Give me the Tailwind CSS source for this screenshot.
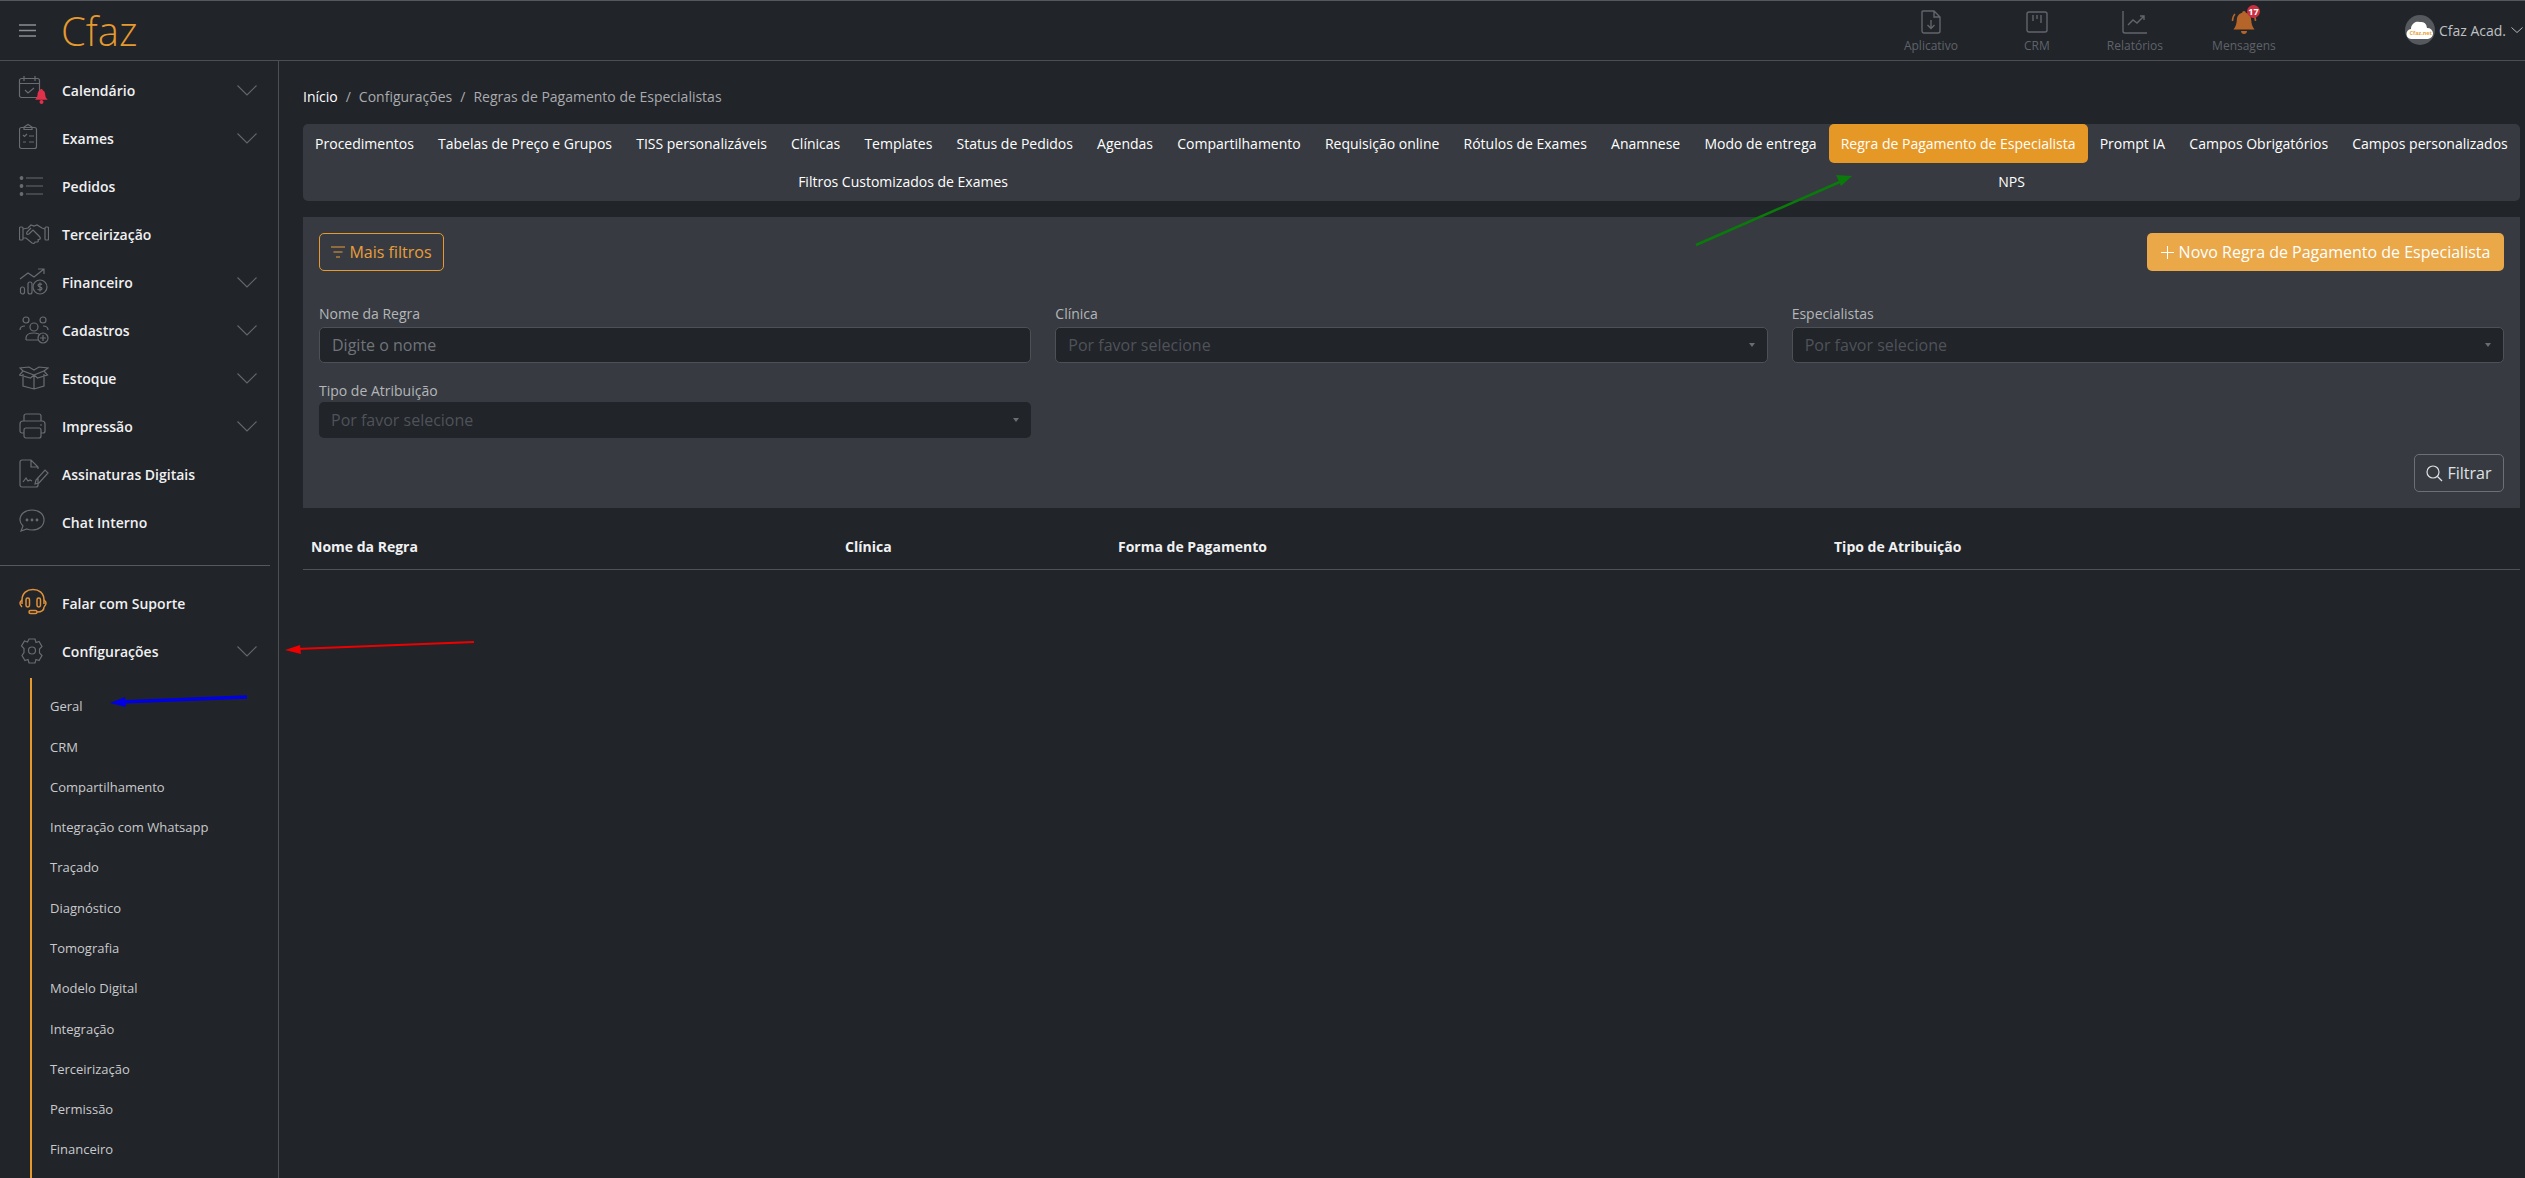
<!DOCTYPE html>
<html lang="pt-BR">
<head>
  <meta charset="UTF-8" />
  <title>Cfaz - Regras de Pagamento de Especialistas</title>
  <script src="https://cdn.jsdelivr.net/npm/@tailwindcss/browser@4"></script>
</head>
<body class="relative h-[1178px] w-[2525px] overflow-hidden bg-[#212429] font-['Open_Sans',sans-serif] text-[14px] text-white">

  <!-- top bar -->
  <header class="flex h-[61px] items-stretch border-t border-b border-t-[#55585c] border-b-[#4b4e53]">
    <div class="flex items-center">
      <svg class="ml-[19px] h-[13px] w-[17px] text-[#8b8e92]" viewBox="0 0 17 13" fill="none" stroke="currentColor" stroke-width="1.3"><path d="M0 1h17M0 6.500h17M0 12h17"/></svg>
      <span class="ml-[25px] text-[40px] leading-[40px] font-light text-[#e69a2e]">Cfaz</span>
    </div>
    <div class="ml-auto flex items-stretch">
      <div class="flex w-[106px] flex-col items-center pt-[9px]">
        <svg class="h-[24px] w-[20px] text-[#62666c]" viewBox="0 0 20 24" fill="none" stroke="currentColor" stroke-width="1.400"><path d="M2 1h11l6 6v14a2 2 0 0 1-2 2H3a2 2 0 0 1-2-2V2a1 1 0 0 1 1-1zM13 1v6h6M10 10v8M6.500 15l3.500 3.500 3.500-3.500"/></svg>
        <span class="mt-[3px] text-[12px] leading-[18px] text-[#5f6369]">Aplicativo</span>
      </div>
      <div class="flex w-[106px] flex-col items-center pt-[9px]">
        <svg class="h-[24px] w-[22px] text-[#62666c]" viewBox="0 0 22 24" fill="none" stroke="currentColor" stroke-width="1.400"><rect x="1" y="2" width="20" height="20" rx="2"/><path d="M7 5v6M11 5v4M15 5v8"/></svg>
        <span class="mt-[3px] text-[12px] leading-[18px] text-[#5f6369]">CRM</span>
      </div>
      <div class="flex w-[90px] flex-col items-center pt-[9px]">
        <svg class="h-[24px] w-[26px] text-[#62666c]" viewBox="0 0 26 24" fill="none" stroke="currentColor" stroke-width="1.400"><path d="M1 1v20a2 2 0 0 0 2 2h22M6 15l5-5 4 3 7-7M18 6h4v4"/></svg>
        <span class="mt-[3px] text-[12px] leading-[18px] text-[#5f6369]">Relatórios</span>
      </div>
      <div class="relative flex w-[128px] flex-col items-center pt-[9px]">
        <svg class="h-[24px] w-[26px] text-[#b5652a]" viewBox="0 0 26 24" fill="currentColor"><path d="M13 1c1 0 1.800.8 1.800 1.800 3.700.9 5.200 3.700 5.400 7.200.2 3.500 1 6.500 3.300 9.500H2.500C4.800 16.500 5.600 13.500 5.800 10c.2-3.500 1.700-6.300 5.400-7.200C11.200 1.800 12 1 13 1z"/><path d="M10 21h6c0 2-1.300 3-3 3s-3-1-3-3z"/><path d="M4 4C2 6 1.500 9 1.500 11M22 4c2 2 2.500 5 2.500 7" fill="none" stroke="currentColor" stroke-width="1.500"/></svg>
        <span class="absolute top-[4px] left-[67px] flex h-[13px] w-[13px] items-center justify-center rounded-full bg-[#c9303f] text-[9px] leading-none font-bold text-white">17</span>
        <span class="mt-[3px] text-[12px] leading-[18px] text-[#5f6369]">Mensagens</span>
      </div>
      <div class="ml-[97px] flex items-center pr-[2px] pb-[1px]">
        <span class="flex h-[30px] w-[30px] items-center justify-center rounded-full bg-[#55585c]">
          <svg class="h-[22px] w-[28px]" viewBox="0 0 28 22"><path fill="#fff" d="M6 20a5 5 0 0 1-1-10 7 7 0 0 1 9-7 6 6 0 0 1 7 6 5.500 5.500 0 0 1 1 11z"/><text x="3.500" y="16" font-size="5.500" font-weight="700" fill="#e8a33c">Cfaz.net</text></svg>
        </span>
        <span class="ml-[4px] text-[14px] text-[#bfc1c3]">Cfaz Acad.</span>
        <svg class="ml-[5px] h-[6px] w-[12px] text-[#b5b7b9]" viewBox="0 0 12 6" fill="none" stroke="currentColor" stroke-width="1"><path d="M.5.5 6 5.500 11.500.5"/></svg>
      </div>
    </div>
  </header>

  <div class="flex h-[1117px]">
    <!-- sidebar -->
    <aside class="w-[279px] shrink-0 overflow-hidden border-r border-[#4b4e53] pt-[5px]">
      <nav class="text-[14px] font-semibold text-[#f0f1f2]">
        <a class="flex h-[48px] items-center pr-[21px] pl-[19px]">
          <svg class="mr-[13px] h-[30px] w-[30px] overflow-visible" viewBox="0 0 30 30" fill="none" stroke="#696d73" stroke-width="1.200"><rect x="0.500" y="3.500" width="20" height="19" rx="2"/><path d="M.5 8.500h20M5 1v5M16 1v5M6 15l3 3 6-5"/><path fill="#e0304a" stroke="none" d="M22.500 14c.8 0 1.200.6 1.200 1.300 2 .6 2.300 2.500 2.500 4.500.2 2 .8 3.500 2.500 5H16c1.700-1.500 2.300-3 2.500-5 .2-2 .5-3.900 2.500-4.500 0-.7.400-1.300 1.500-1.300z"/><circle cx="22.500" cy="27" r="2" fill="#e0304a" stroke="none"/></svg>
          <span>Calendário</span>
          <svg class="ml-auto h-[11px] w-[20px]" viewBox="0 0 20 11" fill="none" stroke="#64686e" stroke-width="1.100"><path d="M.5.5 10 10 19.500.5"/></svg>
        </a>
        <a class="flex h-[48px] items-center pr-[21px] pl-[19px]">
          <svg class="mr-[13px] h-[30px] w-[30px]" viewBox="0 0 30 30" fill="none" stroke="#696d73" stroke-width="1.200"><rect x="0.500" y="4.500" width="17" height="21" rx="2"/><path d="M5 6.500V4l4-2.500L13 4v2.500zM4 12l1.500 1.500L8 11M10 13h5M4 19h3M10 19h5"/></svg>
          <span>Exames</span>
          <svg class="ml-auto h-[11px] w-[20px]" viewBox="0 0 20 11" fill="none" stroke="#64686e" stroke-width="1.100"><path d="M.5.5 10 10 19.500.5"/></svg>
        </a>
        <a class="flex h-[48px] items-center pr-[21px] pl-[19px]">
          <svg class="mr-[13px] h-[30px] w-[30px]" viewBox="0 0 30 30" fill="none" stroke="#696d73" stroke-width="1.200"><path d="M7 7h17M7 15h17M7 23h17"/><circle cx="2.500" cy="7" r="1.300" fill="#696d73"/><circle cx="2.500" cy="15" r="1.300" fill="#696d73"/><circle cx="2.500" cy="23" r="1.300" fill="#696d73"/></svg>
          <span>Pedidos</span>
        </a>
        <a class="flex h-[48px] items-center pr-[21px] pl-[19px]">
          <svg class="mr-[13px] h-[30px] w-[30px]" viewBox="0 0 30 30" fill="none" stroke="#696d73" stroke-width="1.200"><rect x="0.500" y="8" width="3.500" height="13" rx="1"/><rect x="26" y="8" width="3.500" height="13" rx="1"/><path d="M4 10l5-1 3-3 3 1 3-1 5 3 3 1M4 19l3 0 6 5c2 1 3 0 3-1l2 0c1 0 2-1 1-2l2-1c1-1 0-2-1-3l-6-6-4 4c-2 1-3 0-2-2l4-4"/></svg>
          <span>Terceirização</span>
        </a>
        <a class="flex h-[48px] items-center pr-[21px] pl-[19px]">
          <svg class="mr-[13px] h-[30px] w-[30px]" viewBox="0 0 30 30" fill="none" stroke="#696d73" stroke-width="1.200"><path d="M1 12l8-6 6 4 10-8M19 2h6v5"/><rect x="1.500" y="20" width="4" height="7" rx="2"/><rect x="9" y="15" width="4" height="12" rx="2"/><circle cx="21" cy="20" r="7"/><path d="M23 17.500c-1-1-4-1-4 .8 0 2 4 1 4 3.200 0 1.800-3 1.800-4.500.8M21 15.500v9"/></svg>
          <span>Financeiro</span>
          <svg class="ml-auto h-[11px] w-[20px]" viewBox="0 0 20 11" fill="none" stroke="#64686e" stroke-width="1.100"><path d="M.5.5 10 10 19.500.5"/></svg>
        </a>
        <a class="flex h-[48px] items-center pr-[21px] pl-[19px]">
          <svg class="mr-[13px] h-[30px] w-[30px]" viewBox="0 0 30 30" fill="none" stroke="#696d73" stroke-width="1.200"><circle cx="7" cy="5" r="3"/><circle cx="24" cy="5" r="3"/><circle cx="15" cy="12" r="4"/><path d="M1 15c0-3 2-4 5-4M29 15c0-3-2-4-5-4M7 25v-2c0-3 3-5 8-5 2 0 3 .3 5 1M7 25h12"/><circle cx="24" cy="23" r="5"/><path d="M24 20v6M21 23h6"/></svg>
          <span>Cadastros</span>
          <svg class="ml-auto h-[11px] w-[20px]" viewBox="0 0 20 11" fill="none" stroke="#64686e" stroke-width="1.100"><path d="M.5.5 10 10 19.500.5"/></svg>
        </a>
        <a class="flex h-[48px] items-center pr-[21px] pl-[19px]">
          <svg class="mr-[13px] h-[30px] w-[30px]" viewBox="0 0 30 30" fill="none" stroke="#696d73" stroke-width="1.200"><path d="M4 11v12l11 3 10-3V11M15 12v14M15 12L4 8l-3.500 4 11 3zM15 12l10-4 3.500 4-10 3zM4 8l-3-3 9-1 5 3 5-3 9 1-4 3"/></svg>
          <span>Estoque</span>
          <svg class="ml-auto h-[11px] w-[20px]" viewBox="0 0 20 11" fill="none" stroke="#64686e" stroke-width="1.100"><path d="M.5.5 10 10 19.500.5"/></svg>
        </a>
        <a class="flex h-[48px] items-center pr-[21px] pl-[19px]">
          <svg class="mr-[13px] h-[30px] w-[30px]" viewBox="0 0 30 30" fill="none" stroke="#696d73" stroke-width="1.200"><path d="M5 10V5a2 2 0 0 1 2-2h13a2 2 0 0 1 2 2v5M5 22H3a2 2 0 0 1-2-2v-7a3 3 0 0 1 3-3h19a3 3 0 0 1 3 3v7a2 2 0 0 1-2 2h-2"/><rect x="5" y="17" width="17" height="10" rx="2"/><path d="M21 14h2"/></svg>
          <span>Impressão</span>
          <svg class="ml-auto h-[11px] w-[20px]" viewBox="0 0 20 11" fill="none" stroke="#64686e" stroke-width="1.100"><path d="M.5.5 10 10 19.500.5"/></svg>
        </a>
        <a class="flex h-[48px] items-center pr-[21px] pl-[19px]">
          <svg class="mr-[13px] h-[30px] w-[30px]" viewBox="0 0 30 30" fill="none" stroke="#696d73" stroke-width="1.200"><path d="M19 18v8a2 2 0 0 1-2 2H3a2 2 0 0 1-2-2V3a2 2 0 0 1 2-2h9l7 7v2M12 1v7h7M4 23l3-4 2 3 2-1 2 1M17 21l-1 4 4-1 9-10-3-3z"/></svg>
          <span>Assinaturas Digitais</span>
        </a>
        <a class="flex h-[48px] items-center pr-[21px] pl-[19px]">
          <svg class="mr-[13px] h-[30px] w-[30px]" viewBox="0 0 30 30" fill="none" stroke="#696d73" stroke-width="1.200"><path d="M13 3c7 0 12 4 12 10s-5 10-12 10c-2 0-3 0-5-1l-6 2 2-5c-2-2-3-4-3-6C1 7 6 3 13 3z"/><circle cx="8" cy="13" r=".8" fill="#696d73"/><circle cx="13" cy="13" r=".8" fill="#696d73"/><circle cx="18" cy="13" r=".8" fill="#696d73"/></svg>
          <span>Chat Interno</span>
        </a>

        <div class="mt-[19px] mb-[13px] h-px w-[270px] bg-[#55585c]"></div>

        <a class="flex h-[48px] items-center pr-[21px] pl-[19px]">
          <svg class="mr-[13px] h-[30px] w-[30px]" viewBox="0 0 30 30" fill="none" stroke="#e0913a" stroke-width="1.500"><path d="M3 16V12C3 5 8 1.500 14 1.500S25 5 25 12v4"/><rect x="7" y="10" width="3.500" height="9" rx="1.700"/><rect x="18" y="10" width="3.500" height="9" rx="1.700"/><path d="M3 12c-1.500 1-2 2-2 3s1 3 2 4M25 12c1.500 1 2 2 2 3s-1 3-2 4M25 19c0 4-3 5-7 5"/><rect x="10" y="22.500" width="8" height="3" rx="1.500"/></svg>
          <span>Falar com Suporte</span>
        </a>
        <a class="flex h-[48px] items-center pr-[21px] pl-[19px]">
          <svg class="mr-[13px] h-[30px] w-[30px]" viewBox="0 0 30 30" fill="none" stroke="#696d73" stroke-width="1.200"><path d="M10 3h6l1 3.500 3-1 3 5-2.500 2.500v4l2.500 2.500-3 5-3-1-1 3.500h-6l-1-3.500-3 1-3-5L5 16.500v-4L2.500 10l3-5 3 1z"/><circle cx="13" cy="14.500" r="3.500"/></svg>
          <span>Configurações</span>
          <svg class="ml-auto h-[11px] w-[20px]" viewBox="0 0 20 11" fill="none" stroke="#64686e" stroke-width="1.100"><path d="M.5.5 10 10 19.500.5"/></svg>
        </a>
      </nav>

      <ul class="mt-[3px] ml-[30px] border-l-2 border-[#e69a2e] pt-[9px] pb-[40px] pl-[18px] text-[13px] text-[#c9cacc]">
        <li class="flex h-[40.27px] items-center">Geral</li>
        <li class="flex h-[40.27px] items-center">CRM</li>
        <li class="flex h-[40.27px] items-center">Compartilhamento</li>
        <li class="flex h-[40.27px] items-center">Integração com Whatsapp</li>
        <li class="flex h-[40.27px] items-center">Traçado</li>
        <li class="flex h-[40.27px] items-center">Diagnóstico</li>
        <li class="flex h-[40.27px] items-center">Tomografia</li>
        <li class="flex h-[40.27px] items-center">Modelo Digital</li>
        <li class="flex h-[40.27px] items-center">Integração</li>
        <li class="flex h-[40.27px] items-center">Terceirização</li>
        <li class="flex h-[40.27px] items-center">Permissão</li>
        <li class="flex h-[40.27px] items-center">Financeiro</li>
      </ul>
    </aside>

    <!-- content -->
    <main class="min-w-0 flex-1 pt-[26px] pr-[5px] pl-[24px]">
      <nav class="flex h-[20px] items-center text-[14px] leading-[20px] text-[#a9abae]">
        <span class="text-white">Início</span>
        <span class="mx-[8px]">/</span>
        <span>Configurações</span>
        <span class="mx-[8px]">/</span>
        <span>Regras de Pagamento de Especialistas</span>
      </nav>

      <div class="mt-[17px] flex flex-wrap justify-around rounded-[5px] bg-[#373b41] pb-[1px] text-[14px] text-white">
        <a class="flex h-[39px] items-center rounded-[5px] px-[12px]">Procedimentos</a>
        <a class="flex h-[39px] items-center rounded-[5px] px-[12px]">Tabelas de Preço e Grupos</a>
        <a class="flex h-[39px] items-center rounded-[5px] px-[12px]">TISS personalizáveis</a>
        <a class="flex h-[39px] items-center rounded-[5px] px-[12px]">Clínicas</a>
        <a class="flex h-[39px] items-center rounded-[5px] px-[12px]">Templates</a>
        <a class="flex h-[39px] items-center rounded-[5px] px-[12px]">Status de Pedidos</a>
        <a class="flex h-[39px] items-center rounded-[5px] px-[12px]">Agendas</a>
        <a class="flex h-[39px] items-center rounded-[5px] px-[12px]">Compartilhamento</a>
        <a class="flex h-[39px] items-center rounded-[5px] px-[12px]">Requisição online</a>
        <a class="flex h-[39px] items-center rounded-[5px] px-[12px]">Rótulos de Exames</a>
        <a class="flex h-[39px] items-center rounded-[5px] px-[12px]">Anamnese</a>
        <a class="flex h-[39px] items-center rounded-[5px] px-[12px]">Modo de entrega</a>
        <a class="flex h-[39px] items-center rounded-[5px] bg-[#e69826] px-[12px]">Regra de Pagamento de Especialista</a>
        <a class="flex h-[39px] items-center rounded-[5px] px-[12px]">Prompt IA</a>
        <a class="flex h-[39px] items-center rounded-[5px] px-[12px]">Campos Obrigatórios</a>
        <a class="flex h-[39px] items-center rounded-[5px] px-[12px]">Campos personalizados</a>
        <a class="flex h-[37px] items-center rounded-[5px] px-[12px]">Filtros Customizados de Exames</a>
        <a class="flex h-[37px] items-center rounded-[5px] px-[12px]">NPS</a>
      </div>

      <section class="mt-[16px] bg-[#373b41] px-[16px] py-[16px]">
        <div class="flex justify-between">
          <button class="flex h-[38px] w-[125px] items-center justify-center rounded-[5px] border border-[#e69a2e] text-[16px] text-[#e99e3a]">
            <svg class="mr-[4px] h-[12px] w-[14px]" viewBox="0 0 14 12" fill="none" stroke="currentColor" stroke-width="1"><path d="M0 1h14M2.500 6h9M5 11h4"/></svg>
            Mais filtros
          </button>
          <button class="flex h-[38px] w-[357px] items-center justify-center rounded-[5px] bg-[#eaa848] text-[16px] text-white">
            <svg class="mr-[5px] h-[13px] w-[13px]" viewBox="0 0 13 13" fill="none" stroke="currentColor" stroke-width="1"><path d="M6.500 0v13M0 6.500h13"/></svg>
            Novo Regra de Pagamento de Especialista
          </button>
        </div>

        <div class="mt-[33px] grid grid-cols-3 gap-x-[24px] gap-y-[18px]">
          <div>
            <div class="mb-[3px] h-[20px] leading-[20px] text-[#b4b6b9]">Nome da Regra</div>
            <div class="flex h-[36px] items-center rounded-[5px] border border-[#4d5157] bg-[#212429] px-[12px] text-[16px] text-[#70747a]">Digite o nome</div>
          </div>
          <div>
            <div class="mb-[3px] h-[20px] leading-[20px] text-[#b4b6b9]">Clínica</div>
            <div class="flex h-[36px] items-center justify-between rounded-[5px] border border-[#4d5157] bg-[#212429] px-[12px] text-[16px] text-[#4f5359]">Por favor selecione
              <span class="h-0 w-0 border-x-[3px] border-t-[4px] border-x-transparent border-t-[#6a6e74]"></span>
            </div>
          </div>
          <div>
            <div class="mb-[3px] h-[20px] leading-[20px] text-[#b4b6b9]">Especialistas</div>
            <div class="flex h-[36px] items-center justify-between rounded-[5px] border border-[#4d5157] bg-[#212429] px-[12px] text-[16px] text-[#4f5359]">Por favor selecione
              <span class="h-0 w-0 border-x-[3px] border-t-[4px] border-x-transparent border-t-[#6a6e74]"></span>
            </div>
          </div>
          <div>
            <div class="mb-[1px] h-[20px] leading-[20px] text-[#b4b6b9]">Tipo de Atribuição</div>
            <div class="flex h-[36px] items-center justify-between rounded-[5px] bg-[#212429] px-[12px] text-[16px] text-[#4f5359]">Por favor selecione
              <span class="h-0 w-0 border-x-[3px] border-t-[4px] border-x-transparent border-t-[#6a6e74]"></span>
            </div>
          </div>
        </div>

        <div class="mt-[16px] flex justify-end">
          <button class="flex h-[38px] w-[90px] items-center justify-center rounded-[5px] border border-[#6c7076] text-[16px] text-[#dfe1e3]">
            <svg class="mr-[4px] h-[17px] w-[17px]" viewBox="0 0 17 17" fill="none" stroke="currentColor" stroke-width="1.200"><circle cx="7" cy="7" r="6"/><path d="M11.500 11.500 16 16"/></svg>
            Filtrar
          </button>
        </div>
      </section>

      <div class="grid h-[62px] grid-cols-[534px_273px_716px_1fr] border-b border-[#4f5257] pt-[29px] pl-[8px] text-[14px] font-bold text-[#f0f1f2]">
        <div class="leading-[20px]">Nome da Regra</div>
        <div class="leading-[20px]">Clínica</div>
        <div class="leading-[20px]">Forma de Pagamento</div>
        <div class="leading-[20px]">Tipo de Atribuição</div>
      </div>
    </main>
  </div>

  <!-- arrows drawn on top of the screenshot -->
  <svg class="pointer-events-none absolute top-0 left-0" width="2525" height="1178" fill="none">
    <path d="M1696 245 1842 181" stroke="#0a7a0a" stroke-width="2.500"/>
    <path d="M1852 176l-16-1 5 11z" fill="#0a7a0a"/>
    <path d="M474 642 296 649" stroke="#ee0000" stroke-width="2"/>
    <path d="M285 650l15-5 1 9z" fill="#ee0000"/>
    <path d="M247 697 120 702" stroke="#0000e0" stroke-width="3.500"/>
    <path d="M110 703l15-6 1 10z" fill="#0000e0"/>
  </svg>
</body>
</html>
